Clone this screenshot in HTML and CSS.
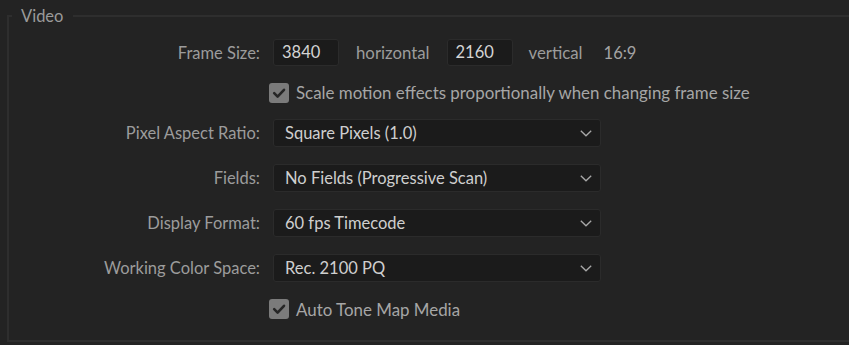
FILE: index.html
```html
<!DOCTYPE html>
<html>
<head>
<meta charset="utf-8">
<link rel="stylesheet" href="styles.css">
</head>
<body>
<div class="group">
  <span class="legend">Video</span>
  <div class="form">
    <div class="label">Frame Size:</div>
    <div class="size-row">
      <div class="num">3840</div>
      <span class="unit u-h">horizontal</span>
      <div class="num">2160</div>
      <span class="unit u-v">vertical</span>
      <span class="ratio">16:9</span>
    </div>

    <div class="label"></div>
    <div class="check-row">
      <span class="box"><svg width="20" height="20" viewBox="0 0 20 20"><path d="M5.2 10.2 L8.6 13.6 L15 6.8" fill="none" stroke="#262626" stroke-width="2.6" stroke-linecap="round" stroke-linejoin="round"/></svg></span>
      <span class="check-text">Scale motion effects proportionally when changing frame size</span>
    </div>

    <div class="label">Pixel Aspect Ratio:</div>
    <div class="select"><span>Square Pixels (1.0)</span><svg class="chev" width="12" height="7" viewBox="0 0 12 7"><path d="M0.8 0.8 L6 5.8 L11.2 0.8" fill="none" stroke="#a8a8a8" stroke-width="1.3"/></svg></div>

    <div class="label">Fields:</div>
    <div class="select"><span>No Fields (Progressive Scan)</span><svg class="chev" width="12" height="7" viewBox="0 0 12 7"><path d="M0.8 0.8 L6 5.8 L11.2 0.8" fill="none" stroke="#a8a8a8" stroke-width="1.3"/></svg></div>

    <div class="label">Display Format:</div>
    <div class="select"><span>60 fps Timecode</span><svg class="chev" width="12" height="7" viewBox="0 0 12 7"><path d="M0.8 0.8 L6 5.8 L11.2 0.8" fill="none" stroke="#a8a8a8" stroke-width="1.3"/></svg></div>

    <div class="label">Working Color Space:</div>
    <div class="select"><span>Rec. 2100 PQ</span><svg class="chev" width="12" height="7" viewBox="0 0 12 7"><path d="M0.8 0.8 L6 5.8 L11.2 0.8" fill="none" stroke="#a8a8a8" stroke-width="1.3"/></svg></div>

    <div class="label"></div>
    <div class="check-row">
      <span class="box"><svg width="20" height="20" viewBox="0 0 20 20"><path d="M5.2 10.2 L8.6 13.6 L15 6.8" fill="none" stroke="#262626" stroke-width="2.6" stroke-linecap="round" stroke-linejoin="round"/></svg></span>
      <span class="check-text">Auto Tone Map Media</span>
    </div>
  </div>
</div>
</body>
</html>
```

FILE: styles.css
```css
html, body {
  margin: 0;
  padding: 0;
  background: #232323;
  overflow: hidden;
  width: 849px;
  height: 345px;
}
body {
  font-family: Lato, "Liberation Sans", sans-serif;
  font-size: 16.5px;
  color: #9c9c9c;
}
.group {
  position: relative;
  margin: 15px 0 0 7px;
  border: 2px solid #2e2e2e;
  border-right: none;
  padding: 22px 0 21px 0;
}
.legend {
  position: absolute;
  top: -11px;
  left: 3px;
  padding: 0 10px 0 9px;
  line-height: 20px;
  background: #232323;
  color: #9a9a9a;
}
.form {
  display: grid;
  grid-template-columns: 251px 328px;
  grid-template-rows: 27px 19px 28px 28px 28px 28px 20px;
  column-gap: 13px;
  row-gap: 17px;
  align-items: center;
}
.label {
  text-align: right;
  white-space: nowrap;
  color: #9c9c9c;
}
.size-row {
  display: flex;
  align-items: center;
  height: 27px;
  width: max-content;
  white-space: nowrap;
}
.num {
  box-sizing: border-box;
  flex: none;
  width: 66px;
  height: 27px;
  line-height: 25px;
  padding-left: 8px;
  background: #1b1b1b;
  border: 1px solid #2b2b2b;
  border-radius: 3px;
  color: #d4d4d4;
}
.unit { color: #9c9c9c; font-size: 16.8px; }
.u-h { margin: 0 17px 0 17px; }
.u-v { margin: 0 21px 0 16px; }
.ratio { color: #a4a4a4; }
.check-row {
  display: flex;
  align-items: center;
  height: 20px;
  width: max-content;
  margin-left: -4px;
  white-space: nowrap;
}
.box {
  width: 20px;
  height: 20px;
  border-radius: 3px;
  background: #7b7b7b;
  display: block;
  flex: none;
}
.box svg { display: block; }
.check-text {
  margin-left: 7px;
  font-size: 16.9px;
  color: #a6a6a6;
}
.select {
  box-sizing: border-box;
  height: 28px;
  display: flex;
  align-items: center;
  justify-content: space-between;
  padding: 0 8px 0 11px;
  background: #1b1b1b;
  border: 1px solid #2b2b2b;
  border-radius: 3px;
  color: #cfcfcf;
  white-space: nowrap;
}
.chev { display: block; flex: none; }
```
